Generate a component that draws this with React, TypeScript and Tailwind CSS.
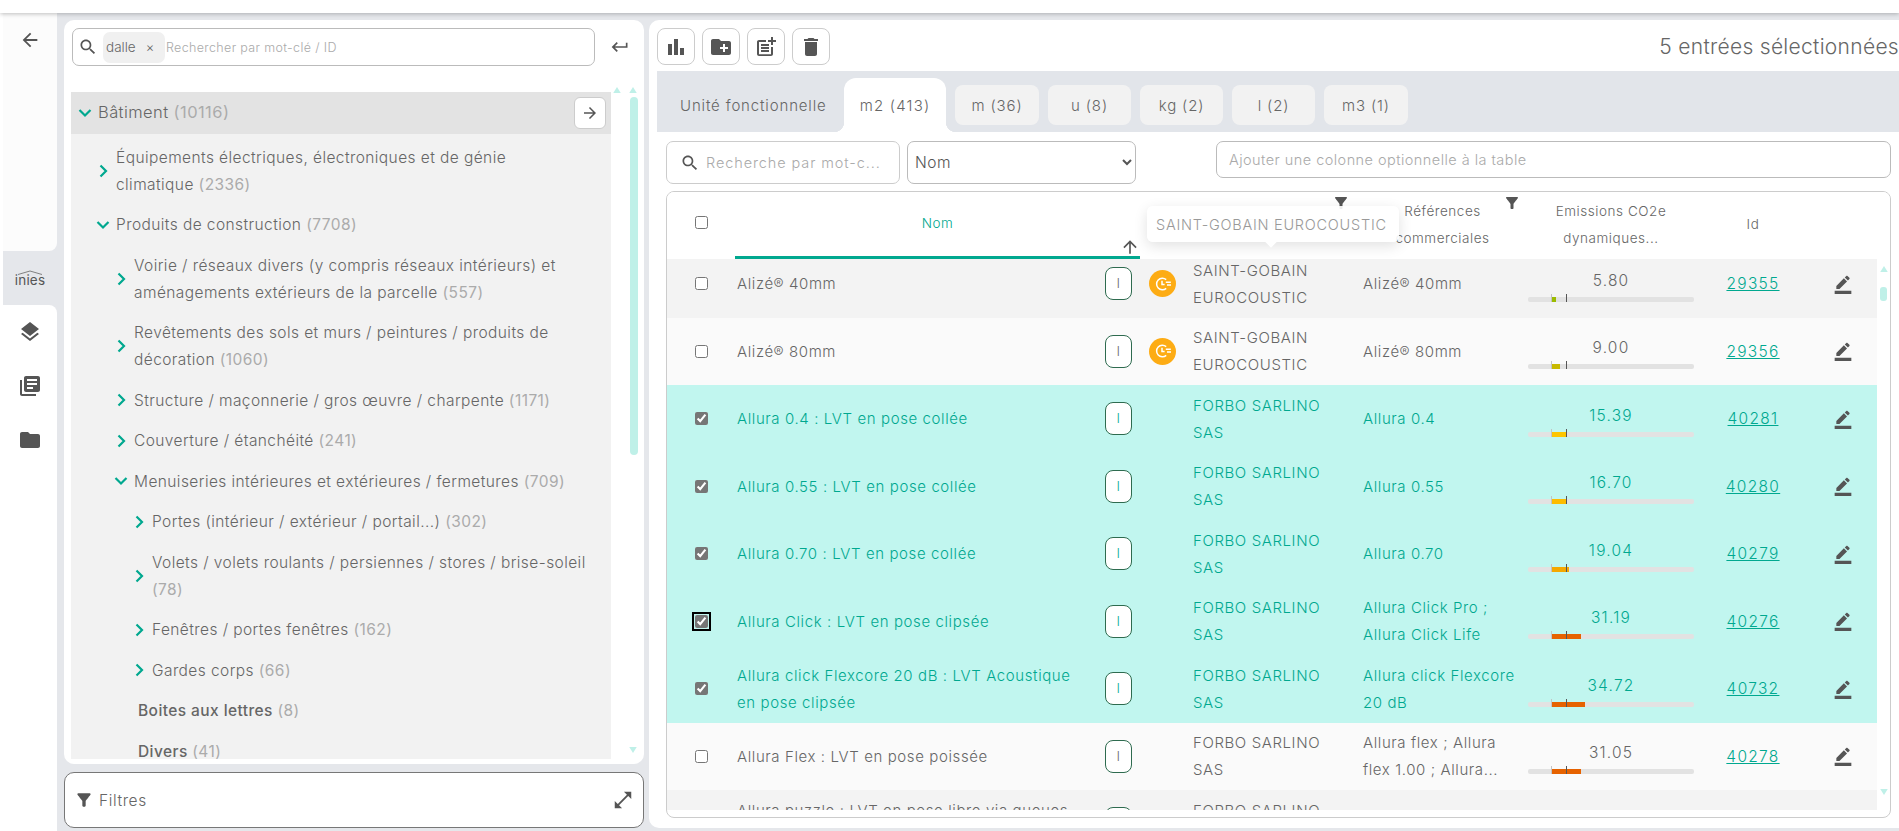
import React from "react";

const P = {
  search: "M15.5 14h-.79l-.28-.27C15.41 12.59 16 11.11 16 9.5 16 5.91 13.09 3 9.5 3S3 5.91 3 9.5 5.91 16 9.5 16c1.61 0 3.09-.59 4.23-1.57l.27.28v.79l5 4.99L20.49 19l-4.99-5zm-6 0C7.01 14 5 11.99 5 9.5S7.01 5 9.5 5 14 7.01 14 9.5 11.99 14 9.5 14z",
  back: "M20 11H7.83l5.59-5.59L12 4l-8 8 8 8 1.41-1.41L7.83 13H20v-2z",
  forward: "M12 4l-1.41 1.41L16.17 11H4v2h12.17l-5.58 5.59L12 20l8-8z",
  ret: "M19 7v4H5.83l3.58-3.59L8 6l-6 6 6 6 1.41-1.41L5.83 13H21V7z",
  layers: "M11.99 18.54l-7.37-5.73L3 14.07l9 7 9-7-1.63-1.27-7.38 5.74zM12 16l7.36-5.73L21 9l-9-7-9 7 1.63 1.27L12 16z",
  books: "M4 6H2v14c0 1.1.9 2 2 2h14v-2H4V6zm16-4H8c-1.1 0-2 .9-2 2v12c0 1.1.9 2 2 2h12c1.1 0 2-.9 2-2V4c0-1.1-.9-2-2-2zm-1 9H9V9h10v2zm-4 4H9v-2h6v2zm4-8H9V5h10v2z",
  folder: "M10 4H4c-1.1 0-1.99.9-1.99 2L2 18c0 1.1.9 2 2 2h16c1.1 0 2-.9 2-2V8c0-1.1-.9-2-2-2h-8l-2-2z",
  newFolder: "M20 6h-8l-2-2H4c-1.11 0-1.99.89-1.99 2L2 18c0 1.11.89 2 2 2h16c1.11 0 2-.89 2-2V8c0-1.11-.89-2-2-2zm-1 8h-3v3h-2v-3h-3v-2h3V9h2v3h3v2z",
  chart: "M4 9h4v11H4zM16 13h4v7h-4zM10 4h4v16h-4z",
  postAdd: "M17 19.22H5V7h7V5H5c-1.1 0-2 .9-2 2v12c0 1.1.9 2 2 2h12c1.1 0 2-.9 2-2v-7h-2v7.22zM19 2h-2v3h-3c.01.01 0 2 0 2h3v2.99c.01.01 2 0 2 0V7h3V5h-3V2zM7 9h8v2H7zM7 12v2h8v-2h-3zM7 15h8v2H7z",
  del: "M6 19c0 1.1.9 2 2 2h8c1.1 0 2-.9 2-2V7H6v12zM19 4h-3.5l-1-1h-5l-1 1H5v2h14V4z",
  filter: "M4.25 5.61C6.27 8.2 10 13 10 13v6c0 .55.45 1 1 1h2c.55 0 1-.45 1-1v-6s3.72-4.8 5.74-7.39c.51-.66.04-1.61-.79-1.61H5.04c-.83 0-1.3.95-.79 1.61z",
  full: "M21 11V3h-8l3.29 3.29-10 10L3 13v8h8l-3.29-3.29 10-10z",
  edit: "M22 24H2v-4h20v4zM13.06 5.19l3.75 3.75L7.75 18H4v-3.75l9.06-9.06zm4.82 2.68-3.75-3.75 1.83-1.83c.39-.39 1.02-.39 1.41 0l2.34 2.34c.39.39.39 1.02 0 1.41l-1.83 1.83z",
  up: "M4 12l1.41 1.41L11 7.83V20h2V7.83l5.58 5.59L20 12l-8-8-8 8z",
};

function I({ d, className }: { d: string; className: string }) {
  return (
    <svg viewBox="0 0 24 24" className={className} fill="currentColor">
      <path d={d} />
    </svg>
  );
}

function Chev({ open }: { open?: boolean }) {
  return (
    <svg viewBox="0 0 14 14" className="w-[14px] h-[14px] shrink-0 text-[#00a88f]" fill="none" stroke="currentColor" strokeWidth="2.2">
      <path d={open ? "M1.5 4l5.5 5.5L12.5 4" : "M4.5 1.5L10 7l-5.5 5.5"} />
    </svg>
  );
}

function Tri({ down, className }: { down?: boolean; className: string }) {
  return (
    <svg viewBox="0 0 10 8" className={className} fill="#bff0e8">
      <path d={down ? "M0 0h10L5 8z" : "M0 8h10L5 0z"} />
    </svg>
  );
}

function TreeRow({ level, count, text, open, leaf, top, wide }: { level: number; count: string; text: string; open?: boolean; leaf?: boolean; top?: boolean; wide?: boolean }) {
  const pad = ["pl-[7px]", "pl-[25px]", "pl-[43px]", "pl-[61px]"][level];
  return (
    <div className={`flex items-center ${pad} ${top ? "h-[42px] mb-[3px] bg-[#e3e3e3] relative text-[16.5px]" : "py-[6.75px]"}`}>
      {leaf ? <span className="w-[67px] shrink-0 -ml-[61px]" /> : <Chev open={open} />}
      <div className={`${leaf ? "ml-0 font-medium" : "ml-[6px]"} ${wide ? "pr-[10px]" : "pr-[36px]"} ${top ? "pb-[1px]" : ""}`}>
        {text} <span className="text-[#ababab] font-normal">{count}</span>
      </div>
      {top && (
        <button className="absolute left-[503px] top-[5px] w-[32px] h-[32px] bg-white border border-[#ccc] rounded-[6px] flex items-center justify-center text-[#555]">
          <I d={P.forward} className="w-[18px] h-[18px]" />
        </button>
      )}
    </div>
  );
}

function ToolBtn({ d }: { d: string }) {
  return (
    <button className="w-[38px] h-[37px] border border-[#ccc] rounded-[8px] bg-white flex items-center justify-center text-[#555]">
      <I d={d} className="w-[24px] h-[24px]" />
    </button>
  );
}

function Clock() {
  return (
    <span className="w-[27px] h-[27px] rounded-full bg-[#fdac14] flex items-center justify-center">
      <svg viewBox="0 0 20 20" className="w-[20px] h-[20px]" fill="none" stroke="#fff" strokeWidth="1.5">
        <path d="M13.2 5.6A5.8 5.8 0 1 0 13.2 14.4" />
        <path d="M9 6.8v3.6h2.6" />
        <path d="M12.8 8.2h5M14 11h4" />
      </svg>
    </span>
  );
}

type Row = { name: string[]; maker: string[]; ref: string[]; val: string; id: string; fill: number; color: string; sel?: boolean; clock?: boolean; focus?: boolean };

const SG = ["SAINT-GOBAIN", "EUROCOUSTIC"];
const FS = ["FORBO SARLINO", "SAS"];
const rows: Row[] = [
  { name: ["Alizé® 40mm"], maker: SG, ref: ["Alizé® 40mm"], val: "5.80", id: "29355", fill: 4, color: "#9bbb00", clock: true },
  { name: ["Alizé® 80mm"], maker: SG, ref: ["Alizé® 80mm"], val: "9.00", id: "29356", fill: 8, color: "#c8b900", clock: true },
  { name: ["Allura 0.4 : LVT en pose collée"], maker: FS, ref: ["Allura 0.4"], val: "15.39", id: "40281", fill: 15, color: "#fdc500", sel: true },
  { name: ["Allura 0.55 : LVT en pose collée"], maker: FS, ref: ["Allura 0.55"], val: "16.70", id: "40280", fill: 15, color: "#fdbc00", sel: true },
  { name: ["Allura 0.70 : LVT en pose collée"], maker: FS, ref: ["Allura 0.70"], val: "19.04", id: "40279", fill: 17, color: "#f5a800", sel: true },
  { name: ["Allura Click : LVT en pose clipsée"], maker: FS, ref: ["Allura Click Pro ;", "Allura Click Life"], val: "31.19", id: "40276", fill: 29, color: "#e66200", sel: true, focus: true },
  { name: ["Allura click Flexcore 20 dB : LVT Acoustique", "en pose clipsée"], maker: FS, ref: ["Allura click Flexcore", "20 dB"], val: "34.72", id: "40732", fill: 33, color: "#e66200", sel: true },
  { name: ["Allura Flex : LVT en pose poissée"], maker: FS, ref: ["Allura flex ; Allura", "flex 1.00 ; Allura..."], val: "31.05", id: "40278", fill: 29, color: "#e66200" },
  { name: ["Allura puzzle : LVT en pose libre via queues", "d'aronde"], maker: FS, ref: ["Allura puzzle"], val: "33.10", id: "40277", fill: 31, color: "#e66200" },
];

function TableRow({ r, i }: { r: Row; i: number }) {
  const bg = r.sel ? "bg-[#c1f6ef] text-[#00a88f]" : i % 2 === 0 ? "bg-[#f3f3f3] text-[#666]" : "bg-[#fafafa] text-[#666]";
  return (
    <div className={`flex items-center h-[67.5px] text-[15px] tracking-[0.6px] ${bg}`}>
      <div className="w-[68px] shrink-0 flex justify-center">
        <input
          type="checkbox"
          readOnly
          checked={!!r.sel}
          className={`accent-[#767676] ${r.focus ? "outline-2 outline-black outline-offset-[1px] rounded-[2px]" : ""}`}
        />
      </div>
      <div className="w-[370px] shrink-0 pl-[2px]">
        {r.name.map((t) => (
          <div key={t} className="whitespace-nowrap">{t}</div>
        ))}
      </div>
      <div className="w-[27px] h-[33px] shrink-0 rounded-[8px] border border-[#2e6b4f] bg-white flex items-center justify-center text-[13px]">l</div>
      <div className="w-[61px] shrink-0 pl-[17px]">{r.clock && <Clock />}</div>
      <div className="w-[170px] shrink-0">
        {r.maker.map((t) => (
          <div key={t}>{t}</div>
        ))}
      </div>
      <div className="w-[165px] shrink-0">
        {r.ref.map((t) => (
          <div key={t} className="whitespace-nowrap">{t}</div>
        ))}
      </div>
      <div className="w-[166px] shrink-0 flex flex-col items-center pt-[4px]">
        <div className="leading-[22px] text-[15.5px] tracking-[1.2px]">{r.val}</div>
        <div className="relative w-full h-[5px] mt-[5px] rounded-[2px] bg-[#e2e2e2]">
          <div className="absolute left-[24px] top-0 h-full" style={{ width: r.fill, backgroundColor: r.color }} />
          <div className="absolute left-[23px] -top-[3px] w-px h-[8px] bg-[#c4c4c4]" />
          <div className="absolute left-[38px] -top-[3px] w-px h-[8px] bg-[#555]" />
        </div>
      </div>
      <div className="w-[118px] shrink-0 text-center">
        <a className="underline text-[#00a88f] text-[15.5px] tracking-[1.3px]">{r.id}</a>
      </div>
      <div className="w-[62px] shrink-0 pl-[21px] text-[#555]">
        <I d={P.edit} className="w-[20px] h-[20px]" />
      </div>
    </div>
  );
}

export default function App() {
  return (
    <div className="w-[1899px] h-[831px] overflow-hidden flex flex-col bg-[#e5e7eb] text-[#666] text-[14.5px] leading-[27px] font-light [font-family:Inter,'Liberation_Sans',sans-serif]">
      <div className="h-[13px] shrink-0 bg-white shadow-[0_1px_4px_rgba(0,0,0,0.25)] relative z-10" />
      <div className="flex-1 flex min-h-0">
        {/* sidebar */}
        <div className="w-[57px] shrink-0 pl-[3px] flex flex-col [background:linear-gradient(90deg,#fff_3px,transparent_3px)]">
          <div className="h-[238px] bg-[#fcfcfc] rounded-br-[8px] flex justify-center pt-[16px] text-[#555]">
            <I d={P.back} className="w-[22px] h-[22px]" />
          </div>
          <div className="h-[54px] bg-[#e5e7eb] flex flex-col items-center justify-center text-[#555]">
            <svg viewBox="0 0 26 5" className="w-[26px] h-[5px]" fill="none" stroke="#666" strokeWidth="0.8">
              <path d="M1 4.5L13 1l12 3.5" />
            </svg>
            <span className="text-[13.5px] leading-[11px] tracking-[0.2px] font-normal">inies</span>
          </div>
          <div className="flex-1 bg-white rounded-tr-[8px] flex flex-col items-center pt-[15px] gap-[30px] text-[#555]">
            <I d={P.layers} className="w-[24px] h-[24px]" />
            <I d={P.books} className="w-[24px] h-[24px]" />
            <I d={P.folder} className="w-[24px] h-[24px]" />
          </div>
        </div>

        {/* left column */}
        <div className="w-[580px] shrink-0 ml-[7px] pt-[7px] flex flex-col">
          <div className="h-[744px] bg-white rounded-[10px] relative flex flex-col overflow-hidden">
            <div className="flex items-start h-[72px] pl-[8px] pt-[8px] shrink-0">
              <div className="w-[523px] h-[38px] border border-[#bbb] rounded-[7px] flex items-center pl-[5px]">
                <I d={P.search} className="w-[20px] h-[20px] text-[#555]" />
                <div className="ml-[5px] w-[62px] h-[31px] bg-[#f0f0f0] rounded-[7px] flex items-center pl-[3px] text-[13.5px]">
                  dalle
                  <span className="ml-[10px] text-[13px]">×</span>
                </div>
                <span className="ml-[1px] text-[12.5px] text-[#aaa] tracking-[0.35px]">Rechercher par mot-clé / ID</span>
              </div>
              <I d={P.ret} className="w-[20px] h-[20px] mt-[9px] ml-[15px] text-[#555]" />
            </div>
            <div className="flex flex-1 min-h-0 pb-[5px]">
              <div className="w-[540px] ml-[7px] bg-[#f2f2f2] overflow-hidden text-[15.5px] tracking-[0.42px]">
                <TreeRow top level={0} text="Bâtiment" count="(10116)" open />
                <TreeRow level={1} text="Équipements électriques, électroniques et de génie climatique" count="(2336)" />
                <TreeRow level={1} text="Produits de construction" count="(7708)" open />
                <TreeRow level={2} text="Voirie / réseaux divers (y compris réseaux intérieurs) et aménagements extérieurs de la parcelle" count="(557)" />
                <TreeRow level={2} text="Revêtements des sols et murs / peintures / produits de décoration" count="(1060)" />
                <TreeRow level={2} text="Structure / maçonnerie / gros œuvre / charpente" count="(1171)" />
                <TreeRow level={2} text="Couverture / étanchéité" count="(241)" />
                <TreeRow level={2} text="Menuiseries intérieures et extérieures / fermetures" count="(709)" open />
                <TreeRow level={3} text="Portes (intérieur / extérieur / portail...)" count="(302)" />
                <TreeRow wide level={3} text="Volets / volets roulants / persiennes / stores / brise-soleil" count="(78)" />
                <TreeRow level={3} text="Fenêtres / portes fenêtres" count="(162)" />
                <TreeRow level={3} text="Gardes corps" count="(66)" />
                <TreeRow leaf level={3} text="Boites aux lettres" count="(8)" />
                <TreeRow leaf level={3} text="Divers" count="(41)" />
              </div>
              <div className="w-[33px] flex flex-col items-end pr-[6px] -mt-[5px] relative">
                <Tri className="w-[8px] h-[6px] absolute left-[2px] top-0" />
                <Tri className="w-[8px] h-[6px] shrink-0 mr-[1px]" />
                <div className="w-[8px] h-[358px] mt-[4px] bg-[#bff0e8] rounded-[4px]" />
                <div className="flex-1" />
                <Tri down className="w-[8px] h-[6px] mb-[6px] mr-[1px]" />
              </div>
            </div>
          </div>
          <div className="mt-[8px] h-[56px] bg-white border border-[#777] rounded-[10px] flex items-center pl-[9px] pr-[9px] shrink-0">
            <I d={P.filter} className="w-[20px] h-[20px] text-[#555]" />
            <span className="ml-[5px] flex-1 text-[15.5px] tracking-[0.6px]">Filtres</span>
            <I d={P.full} className="w-[22px] h-[22px] text-[#555]" />
          </div>
        </div>

        {/* right panel */}
        <div className="flex-1 min-w-0 ml-[5px] mt-[7px] mb-[3px] bg-white rounded-l-[10px] pl-[8px] relative overflow-hidden flex flex-col">
          <div className="flex items-center h-[51px] shrink-0 gap-[7px] pt-[2px]">
            <ToolBtn d={P.chart} />
            <ToolBtn d={P.newFolder} />
            <ToolBtn d={P.postAdd} />
            <ToolBtn d={P.del} />
            <div className="flex-1" />
            <div className="text-[21px] whitespace-nowrap tracking-[0.3px]">5 entrées sélectionnées</div>
          </div>
          {/* tabs */}
          <div className="h-[61px] bg-[#e2e5ea] shrink-0 flex items-start relative text-[15px] tracking-[0.85px]">
            <div className="w-[187px] pl-[23px] whitespace-nowrap h-full flex items-center pt-[8px]">Unité fonctionnelle</div>
            <div className="self-end h-[54px] w-[102px] bg-white rounded-t-[12px] flex items-center justify-center tracking-[1.2px] relative before:absolute before:bottom-0 before:-left-[10px] before:w-[10px] before:h-[10px] before:bg-[radial-gradient(circle_at_0_0,#e2e5ea_10px,#fff_10.5px)] after:absolute after:bottom-0 after:-right-[10px] after:w-[10px] after:h-[10px] after:bg-[radial-gradient(circle_at_100%_0,#e2e5ea_10px,#fff_10.5px)]">m2 (413)</div>
            <div className="ml-[9px] w-[84px] h-[40px] mt-[14px] bg-[#f2f2f2] rounded-[8px] flex items-center justify-center">m (36)</div>
            <div className="ml-[9px] w-[83px] h-[40px] mt-[14px] bg-[#f2f2f2] rounded-[8px] flex items-center justify-center">u (8)</div>
            <div className="ml-[9px] w-[83px] h-[40px] mt-[14px] bg-[#f2f2f2] rounded-[8px] flex items-center justify-center">kg (2)</div>
            <div className="ml-[9px] w-[83px] h-[40px] mt-[14px] bg-[#f2f2f2] rounded-[8px] flex items-center justify-center">l (2)</div>
            <div className="ml-[9px] w-[84px] h-[40px] mt-[14px] bg-[#f2f2f2] rounded-[8px] flex items-center justify-center">m3 (1)</div>
          </div>
          {/* filters row */}
          <div className="flex items-start mt-[9px] h-[43px] shrink-0 pl-[9px]">
            <div className="w-[234px] h-[43px] border border-[#ccc] rounded-[7px] flex items-center pl-[13px] text-[#aaa]">
              <I d={P.search} className="w-[20px] h-[20px] text-[#555]" />
              <span className="ml-[6px] text-[14.5px] tracking-[0.9px] whitespace-nowrap">Recherche par mot-c...</span>
            </div>
            <select className="ml-[7px] w-[229px] h-[43px] border border-[#bbb] rounded-[7px] bg-white pl-[3px] text-[15.5px] tracking-[0.5px] text-[#555]">
              <option>Nom</option>
            </select>
            <div className="ml-[80px] w-[675px] h-[37px] border border-[#bbb] rounded-[7px] flex items-center pl-[12px] text-[#aaa] text-[14.5px] tracking-[0.45px]">
              Ajouter une colonne optionnelle à la table
            </div>
          </div>
          {/* table */}
          <div className="ml-[9px] mt-[7px] w-[1225px] h-[627px] border border-[#ccc] rounded-[8px] flex flex-col relative overflow-hidden shrink-0">
            <div className="h-[67px] shrink-0 flex items-stretch relative z-10 bg-white text-[13.5px] tracking-[0.55px] text-center">
              <div className="w-[68px] shrink-0 flex items-center justify-center pb-[6px]">
                <input type="checkbox" readOnly checked={false} />
              </div>
              <div className="w-[405px] shrink-0 border-b-[3px] border-[#00a88f] flex items-center justify-center text-[#00a88f] relative pb-[2px]">
                Nom
                <I d={P.up} className="absolute right-[0px] -bottom-[1px] w-[20px] h-[20px] text-[#555]" />
              </div>
              <div className="w-[53px] shrink-0" />
              <div className="w-[170px] shrink-0 flex items-center justify-center relative pb-[2px] text-[#c9c9c9]">
                Fabricant
                <I d={P.filter} className="absolute right-[13px] top-[2px] w-[18px] h-[18px] text-[#555]" />
              </div>
              <div className="w-[165px] shrink-0 flex items-center justify-center relative pb-[2px] pr-[6px]">
                <span>Références<br />commerciales</span>
                <I d={P.filter} className="absolute right-[7px] top-[2px] w-[18px] h-[18px] text-[#555]" />
              </div>
              <div className="w-[166px] shrink-0 flex items-center justify-center pb-[2px]">
                <span>Emissions CO2e<br />dynamiques...</span>
              </div>
              <div className="w-[118px] shrink-0 flex items-center justify-center pb-[2px]">Id</div>
            </div>
            <div className="flex-1 min-h-0 flex">
              <div className="w-[1210px] shrink-0 overflow-hidden h-[551px]">
                <div className="-mt-[9px]">
                  {rows.map((r, i) => (
                    <TableRow key={r.id} r={r} i={i} />
                  ))}
                </div>
              </div>
              <div className="flex-1 flex flex-col items-center pt-[7px]">
                <Tri className="w-[8px] h-[6px] shrink-0" />
                <div className="w-[7px] h-[14px] mt-[15px] bg-[#bff0e8] rounded-[3px]" />
                <div className="flex-1" />
                <Tri down className="w-[8px] h-[6px] mb-[22px]" />
              </div>
            </div>
          </div>
          {/* tooltip */}
          <div className="absolute left-[498px] top-[186px] w-[252px] h-[36px] bg-white/90 rounded-[6px] shadow-[0_4px_14px_rgba(0,0,0,0.12)] z-20 flex items-center pl-[9px] text-[#999] text-[14.5px] tracking-[0.75px] whitespace-nowrap after:absolute after:left-[120px] after:-bottom-[4px] after:w-[8px] after:h-[8px] after:bg-white after:rotate-45">
            SAINT-GOBAIN EUROCOUSTIC
          </div>
        </div>
      </div>
    </div>
  );
}
